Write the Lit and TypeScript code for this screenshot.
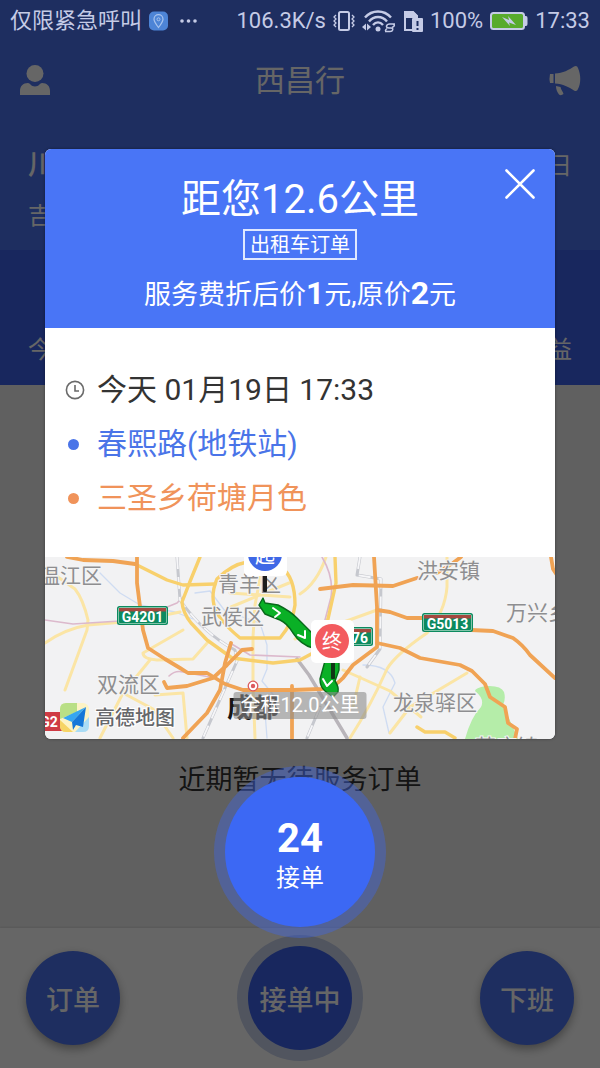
import { LitElement, html, svg, css } from "lit";
import { customElement, property } from "lit/decorators.js";

const line = (d: string, cls: string) => svg`<path class=${cls} d=${d}></path>`;

const paleRoads = [
  "M0 11 L30 32 Q38 42 43 63 L42 73 L20 133",
  "M0 86 Q20 72 43 68 L90 64 L135 55",
  "M138 73 L98 96 Q98 102 112 103 L148 102 L163 85",
  "M105 103 L78 136 L55 181",
  "M78 136 L108 152 L128 181",
  "M110 138 L138 136 L142 181",
  "M208 83 L208 130 L210 181",
  "M402 0 L402 30 Q400 55 382 76 Q350 98 342 112 Q325 150 305 181",
  "M422 116 L365 150 L345 176",
  "M298 113 L345 134 L376 160",
  "M315 120 L308 150",
  "M185 36 L245 40",
  "M186 50 L244 26",
  "M218 6 L210 48 L208 80",
  "M255 37 Q272 26 281 0",
  "M250 82 L285 70 L332 53",
];
const yellowRoads = [
  "M155 0 L146 22 L137 45 Q138 56 146 66 L162 83 L187 101 L228 106 L255 103 L268 96 Q278 80 283 62 L291 26 L290 0",
  "M202 5 Q186 8 172 22 Q166 36 169 48 Q172 62 195 81 L235 81 Q248 66 250 48 Q250 20 236 10 Q222 4 202 5",
  "M90 7 L122 23 L138 28 L170 27",
  "M372 170 L380 175 L400 175 L410 181",
];
const orangeRoads = [
  "M22 0 L38 3 L68 4 L90 7",
  "M92 0 L92 26 L98 73 L103 91 L120 102 L135 111 L143 116 L162 116 L180 127 L198 133 L248 133 L276 132 Q290 130 298 121 L308 108 L332 90 L332 50 L329 0",
  "M119 125 L122 131 L142 129 L168 121 L182 108 L197 93 L207 92",
  "M186 86 L180 106 L175 133 L162 156 L138 181",
  "M247 129 L247 181",
  "M275 32 L308 28 L348 29 L372 21",
  "M392 16 L408 6 L416 0",
  "M332 53 L345 55 L362 61 L380 61",
  "M426 73 L448 74 L468 81 Q478 88 485 98 L510 121",
  "M332 86 L355 91 L375 101 L415 108 L427 114 L440 127 L445 140 L460 150 L463 166 L472 172 L470 182",
  "M506 0 L508 12 L512 18",
];
const rails = [
  "M132 0 L135 43 Q158 76 190 93 L192 104 L158 181",
  "M315 0 L312 18 L336 22 L335 92 L322 110",
  "M275 150 L262 181",
];
const metro = [
  "M0 63 L28 67 L90 63 L132 46 L138 40",
  "M185 86 L205 98 L255 100",
  "M277 0 Q289 20 286 40 L280 63",
  "M124 119 Q130 113 138 115 L170 121",
];
const streams = [
  "M55 16 L75 36 L95 48 L130 55 L148 62",
  "M150 36 L165 34 L180 54 L215 66 L222 88 L222 112 L217 124 L230 140 L220 155 L222 181",
  "M318 108 Q345 108 350 126 L338 150 L344 176",
];

@customElement("route-map")
class RouteMap extends LitElement {
  @property() distance = "";

  static styles = css`
    :host { display: block; position: relative; height: 182px; overflow: hidden; background: #f2f2f3; }
    svg { display: block; width: 100%; height: 100%; }
    path { fill: none; stroke-linecap: round; stroke-linejoin: round; }
    .pale { stroke: #fbe5a5; stroke-width: 3; }
    .yellow { stroke: #f8d06c; stroke-width: 3.4; }
    .orange { stroke: #f0a354; stroke-width: 3.8; }
    .rail { stroke: #c6c8ce; stroke-width: 3; }
    .railgap { stroke: #f6f6f8; stroke-width: 1.8; stroke-dasharray: 12 8; stroke-linecap: butt; }
    .trunk { stroke: #b9b5ba; stroke-width: 3.4; }
    .metro { stroke: #dcb9cc; stroke-width: 1.6; }
    .stream { stroke: #cfdcf2; stroke-width: 1.3; }
    .route { fill: #0ab026; stroke: #08691a; stroke-width: 1.4; }
    .chevron { stroke: #fff; stroke-width: 2; }
    text { font-family: Roboto, "Noto Sans CJK SC", sans-serif; }
    .place { font-size: 21px; fill: #8e8e90; stroke: #f4f4f4; stroke-width: 2px; paint-order: stroke; }
    .city { font-size: 26px; font-weight: 700; fill: #161616; }
    .brand { font-size: 20px; font-weight: 500; fill: #66676b; stroke: #fff; stroke-width: 2px; paint-order: stroke; }
    .shield { font-size: 14px; font-weight: 700; fill: #fff; text-anchor: middle; }
    .pin { font-size: 20px; fill: #fff; text-anchor: middle; }
    .distance {
      position: absolute; left: 50%; bottom: 20px; transform: translateX(-50%);
      padding: 0 7px; border-radius: 3px; background: rgba(140, 140, 140, 0.6);
      color: #fff; font-size: 20px; line-height: 27px; white-space: nowrap;
    }
  `;

  private shield(x: number, y: number, w: number, label: string) {
    return svg`
      <rect x=${x} y=${y} width=${w} height="19" rx="2.5" fill="#0d8a5f"></rect>
      <rect x=${x + 1.5} y=${y + 1.5} width=${w - 3} height="16" rx="1.5" fill="none" stroke="#9fd3bd" stroke-width="0.8"></rect>
      <rect x=${x + 2} y=${y + 2} width=${w - 4} height="3.5" fill="#a4483f"></rect>
      <text class="shield" x=${x + w / 2} y=${y + 16}>${label}</text>`;
  }

  render() {
    return html`
      <svg viewBox="0 0 510 182" preserveAspectRatio="xMidYMid slice" role="img" aria-label="路线地图">
        <path d="M420 182 Q426 160 436 150 Q440 142 430 134 Q430 131 441 129 Q456 128 459 135 Q461 142 458 148 L466 166 L473 182 Z" style="fill:#b5eda9"></path>
        ${streams.map((d) => line(d, "stream"))}
        ${paleRoads.map((d) => line(d, "pale"))}
        ${metro.map((d) => line(d, "metro"))}
        ${rails.map((d) => line(d, "rail"))}
        ${rails.map((d) => line(d, "railgap"))}
        ${line("M252 102 L264 118 L302 181", "trunk")}
        ${yellowRoads.map((d) => line(d, "yellow"))}
        ${orangeRoads.map((d) => line(d, "orange"))}
        <text class="place" x="-6" y="26">温江区</text>
        <text class="place" x="173" y="34">青羊区</text>
        <text class="place" x="156" y="67">武侯区</text>
        <text class="place" x="52" y="135">双流区</text>
        <text class="place" x="372" y="21">洪安镇</text>
        <text class="place" x="461" y="63">万兴乡</text>
        <text class="place" x="348" y="153">龙泉驿区</text>
        <text class="place" x="430" y="197">茶店镇</text>
        ${this.shield(72, 49, 51, "G4201")}
        ${this.shield(377, 56, 51, "G5013")}
        ${this.shield(302, 70, 26, "76")}
        <rect x="-4" y="155" width="24" height="19" rx="2" fill="#cf3b44"></rect>
        <text class="shield" x="4" y="170">G2</text>
        <circle cx="208" cy="129" r="4.8" fill="#fff" stroke="#dc5a5e" stroke-width="1.3"></circle>
        <circle cx="208" cy="129" r="2.2" fill="#dc5a5e"></circle>
        <text class="city" x="182" y="160">成都</text>

        <rect x="15" y="146" width="29" height="29" rx="6" fill="#fdf3c4"></rect>
        <path d="M15 158 V152 Q15 146 21 146 H32 V155 L15 162 Z" style="fill:#b9df86"></path>
        <path d="M15 163 L28 175 H21 Q15 175 15 169 Z" style="fill:#f6d465"></path>
        <path d="M30 175 L44 160 V169 Q44 175 38 175 Z" style="fill:#a9dcf6"></path>
        <path d="M41 150 L18 161 L27 165 Z" style="fill:#35a6f2"></path>
        <path d="M41 150 L27 165 L28 173 L31 168 L38 170 Z" style="fill:#1577d8"></path>
        <text class="brand" x="50" y="168">高德地图</text>

        ${line("M218 41 L220 46 L233 48 Q245 54 252 61 L268 77 L268 91 Q256 88 248 76 Q242 66 235 63 L220 57 L214 48 Z", "route")}
        ${line("M280 104 L275 122 Q275 130 280 134 L288 140 L293 135 Q294 130 290 124 L294 113 L294 104 Z", "route")}
        ${line("M228 51 L235 56 L230 60", "chevron")}
        ${line("M260 74 L260 81 L253 78", "chevron")}
        ${line("M278 122 L282 129 L287 124", "chevron")}
        <rect x="218" y="18" width="4" height="17" rx="1" fill="#1d1d1d"></rect>
        <rect x="199" y="-24" width="43" height="43" rx="5" fill="#fff"></rect>
        <circle cx="220" cy="-3" r="17" fill="#3f68e6"></circle>
        <text class="pin" x="220" y="6">起</text>
        <rect x="286" y="104" width="4" height="18" rx="1" fill="#103515"></rect>
        <rect x="266" y="63" width="43" height="43" rx="5" fill="#fff"></rect>
        <circle cx="287" cy="84" r="17" fill="#f35b5f"></circle>
        <text class="pin" x="287" y="92">终</text>
      </svg>
      <span class="distance">${this.distance}</span>
    `;
  }
}

@customElement("status-bar")
class StatusBar extends LitElement {
  static styles = css`
    :host {
      display: flex; align-items: center; height: 42px; padding: 0 10px;
      color: #c5cbe6; font-size: 22px; line-height: 42px; white-space: nowrap;
    }
    .spacer { flex: 1; }
    .group { display: flex; align-items: center; gap: 7px; }
    svg { display: block; fill: none; stroke: currentColor; }
    .solid { fill: currentColor; stroke: none; }
  `;
  render() {
    return html`
      <div class="group">
        <span>仅限紧急呼叫</span>
        <svg width="52" height="20" viewBox="3 0 52 20">
          <rect x="3" y="0.5" width="19" height="19" rx="5" fill="#4d84d6" stroke="none"></rect>
          <path d="M12.500 16.500 C9.500 12.500 8 10.500 8 8.200 A4.500 4.500 0 0 1 17 8.200 C17 10.500 15.500 12.500 12.500 16.500 Z" stroke="#a9c4ee" stroke-width="1.200"></path>
          <circle cx="12.500" cy="8.300" r="1.500" stroke="#a9c4ee"></circle>
          <circle class="solid" cx="36" cy="10" r="1.800"></circle>
          <circle class="solid" cx="42.500" cy="10" r="1.800"></circle>
          <circle class="solid" cx="49" cy="10" r="1.800"></circle>
        </svg>
      </div>
      <div class="spacer"></div>
      <div class="group">
        <span>106.3K/s</span>
        <svg width="22" height="22" viewBox="0 0 22 22" stroke-width="2">
          <rect x="6" y="2" width="10" height="18" rx="1.500"></rect>
          <path d="M3 5 L1 7 L3 9 L1 11 L3 13 L1 15 L3 17 M19 5 L21 7 L19 9 L21 11 L19 13 L21 15 L19 17" stroke-width="1.300"></path>
        </svg>
        <svg width="34" height="24" viewBox="0 0 34 24">
          <path d="M3 8.500 C10 0.500 22 0.500 29 8.500 M7 12.500 C12 6.500 20 6.500 25 12.500 M11 16 C14 12.500 18 12.500 21 16" stroke-width="2.400"></path>
          <circle class="solid" cx="16" cy="20" r="2.500"></circle>
          <path class="solid" d="M0 18 L4 14.500 V21.500 Z M9 18 L5 14.500 V21.500 Z"></path>
          <path d="M33 15 H28 C24 15 23 19 27 19 H29 C32 19 31 22.500 28 22.500 H23 M25 19.500 C22 22 24 22.500 26 22.500 M30 18.500 C33 17 33 16 31 15" stroke-width="1.500"></path>
        </svg>
        <svg width="20" height="22" viewBox="0 0 20 22">
          <path d="M2 7 V20 H9 M2 7 V3 Q2 2 3 2 H10 L14 6 V8" stroke-width="2"></path>
          <path class="solid" d="M1 1 H10 L15 6 V8 H1 Z"></path>
          <rect class="solid" x="9" y="8" width="11" height="14" rx="1"></rect>
          <path d="M14.500 11 V16 M14.500 18 V20" stroke="#1e2e60" stroke-width="2"></path>
        </svg>
        <span>100%</span>
        <svg width="38" height="20" viewBox="0 0 38 20">
          <rect x="1" y="2" width="33" height="16" rx="2.500" fill="#58ab2c" stroke-width="2"></rect>
          <path class="solid" d="M34 5 H36 Q37.500 5 37.500 7 V13 Q37.500 15 36 15 H34 Z"></path>
          <path class="solid" d="M12 6 L19 9 L18 5 L26 14 L19 11.500 L20 15 Z"></path>
        </svg>
        <span>17:33</span>
      </div>
    `;
  }
}

@customElement("app-root")
class AppRoot extends LitElement {
  @property({ type: Number }) countdown = 24;

  static styles = css`
    :host {
      display: block; position: relative; min-height: 100vh; overflow: hidden;
      font-family: Roboto, "Noto Sans CJK SC", sans-serif;
    }
    * { box-sizing: border-box; }
    button { font: inherit; border: 0; padding: 0; background: none; color: inherit; cursor: pointer; }
    h1, h2, p { margin: 0; font-weight: 400; }
    svg { display: block; }

    .page { display: flex; flex-direction: column; min-height: 100vh; background: #f0f0f0; }
    .top { background: #4b73f0; color: #fff; height: 250px; padding-top: 42px; }
    .appbar { display: flex; align-items: center; justify-content: space-between; height: 78px; padding: 0 19px; }
    .appbar h1 { font-size: 30px; line-height: 40px; }
    .driver { padding: 24px 28px; }
    .driver-row { display: flex; justify-content: space-between; align-items: center; font-size: 24px; line-height: 44px; }
    .plate { font-size: 28px; font-weight: 500; }
    .car { font-size: 24px; line-height: 56px; }
    .stats {
      display: flex; justify-content: space-between; align-items: flex-end;
      height: 135px; padding: 0 28px 17px; background: #3c61eb; color: #fff; font-size: 24px; line-height: 36px;
    }
    .stage { flex: 1; padding-top: 375px; text-align: center; font-size: 27px; line-height: 40px; color: #333; }
    .tabs {
      display: flex; align-items: center; justify-content: space-between;
      height: 140px; padding: 0 26px; background: #fff;
      box-shadow: 0 -1px 2px rgba(0, 0, 0, 0.1);
    }
    .tab {
      width: 94px; height: 94px; border-radius: 50%; background: #4b73f0; color: #fff;
      font-size: 27px; font-weight: 500; box-shadow: 0 4px 10px rgba(0, 0, 0, 0.35);
    }
    .tab.current { width: 104px; height: 104px; background: #3c61eb; box-shadow: 0 0 0 11px #cad4ee; }

    .scrim {
      position: absolute; inset: 0; display: flex; flex-direction: column; align-items: center;
      padding: 149px 45px 0; background: rgba(0, 0, 0, 0.6);
    }
    .system { position: absolute; top: 0; left: 0; right: 0; }
    .dialog { width: 100%; border-radius: 6px; overflow: hidden; background: #fff; box-shadow: 0 0 3px rgba(0, 0, 0, 0.4); }
    .head {
      position: relative; display: flex; flex-direction: column; align-items: center;
      height: 179px; padding-top: 22px; background: #4975f6; color: #fff;
    }
    .head h2 { font-size: 40px; line-height: 58px; }
    .tag { padding: 2px 5px 0; border: 2px solid #dfe8ff; font-size: 20px; line-height: 25px; }
    .fee { margin-top: 13px; font-size: 27px; line-height: 40px; }
    .fee b { font-size: 32px; font-weight: 700; line-height: 40px; }
    .close { position: absolute; top: 20px; right: 20px; }
    .trip { padding: 35px 20px 32px; font-size: 30px; line-height: 54px; color: #333; }
    .trip-row { display: grid; grid-template-columns: 32px 1fr; align-items: center; }
    .dot { width: 11px; height: 11px; margin-left: 3px; border-radius: 50%; background: currentColor; }
    .from { color: #4a74e8; }
    .to { color: #f0935a; }
    .accept {
      display: flex; flex-direction: column; align-items: center; justify-content: center;
      width: 150px; height: 150px; margin-top: 38px; padding-top: 8px; border-radius: 50%;
      background: #3c68f4; color: #fff; box-shadow: 0 0 0 11px rgba(66, 103, 220, 0.45);
      font-size: 24px; line-height: 34px;
    }
    .accept b { font-size: 40px; line-height: 44px; }
  `;

  render() {
    return html`
      <div class="page">
        <header class="top">
          <div class="appbar">
            <button aria-label="个人中心">
              <svg width="32" height="32" viewBox="0 1 32 32" fill="#fff">
                <circle cx="16" cy="9.500" r="8.500"></circle>
                <path d="M1 31 V27 C1 22 4 19 9 19 C11 19 12 22.500 16 22.500 C20 22.500 21 19 23 19 C28 19 31 22 31 27 V31 Z"></path>
              </svg>
            </button>
            <h1>西昌行</h1>
            <button aria-label="公告">
              <svg width="32" height="32" viewBox="0 0 32 32" fill="#fff">
                <path d="M1 9 H4.500 V18 H1 Q0 13.500 1 9 Z"></path>
                <path d="M6 8.500 C14 8 20 5 25 1.500 Q28 0 29 3 C32 10 32 18 29 24 Q28 27 25 25.500 C20 22 14 19 6 18.500 Z"></path>
                <path d="M7 21 L11.500 22 C12 25 14 26.500 14.500 29 Q12 31 10 29.500 C8 27 7 24 7 21 Z"></path>
              </svg>
            </button>
          </div>
          <div class="driver">
            <div class="driver-row"><span class="plate">川</span><span>日</span></div>
            <div class="car">吉</div>
          </div>
        </header>
        <section class="stats"><span>今</span><span>益</span></section>
        <main class="stage">近期暂无待服务订单</main>
        <nav class="tabs">
          <button class="tab">订单</button>
          <button class="tab current">接单中</button>
          <button class="tab">下班</button>
        </nav>
      </div>

      <div class="scrim">
        <section class="dialog" role="dialog" aria-labelledby="away">
          <div class="head">
            <h2 id="away">距您12.6公里</h2>
            <span class="tag">出租车订单</span>
            <p class="fee">服务费折后价<b>1</b>元,原价<b>2</b>元</p>
            <button class="close" aria-label="关闭">
              <svg width="30" height="30" viewBox="0 0 30 30" stroke="#fff" stroke-width="2.600" stroke-linecap="round">
                <path d="M1.500 1.500 L28.500 28.500 M28.500 1.500 L1.500 28.500"></path>
              </svg>
            </button>
          </div>
          <div class="trip">
            <div class="trip-row">
              <svg width="20" height="20" viewBox="0 0 20 20" fill="none" stroke="#6a6a6a" stroke-width="1.600">
                <circle cx="10" cy="10" r="8.600"></circle>
                <path d="M10 5 V11 H14"></path>
              </svg>
              <span>今天 01月19日 17:33</span>
            </div>
            <div class="trip-row from"><i class="dot"></i><span>春熙路(地铁站)</span></div>
            <div class="trip-row to"><i class="dot"></i><span>三圣乡荷塘月色</span></div>
          </div>
          <route-map distance="全程12.0公里"></route-map>
        </section>
        <button class="accept"><b>${this.countdown}</b><span>接单</span></button>
      </div>
      <status-bar class="system"></status-bar>
    `;
  }
}
